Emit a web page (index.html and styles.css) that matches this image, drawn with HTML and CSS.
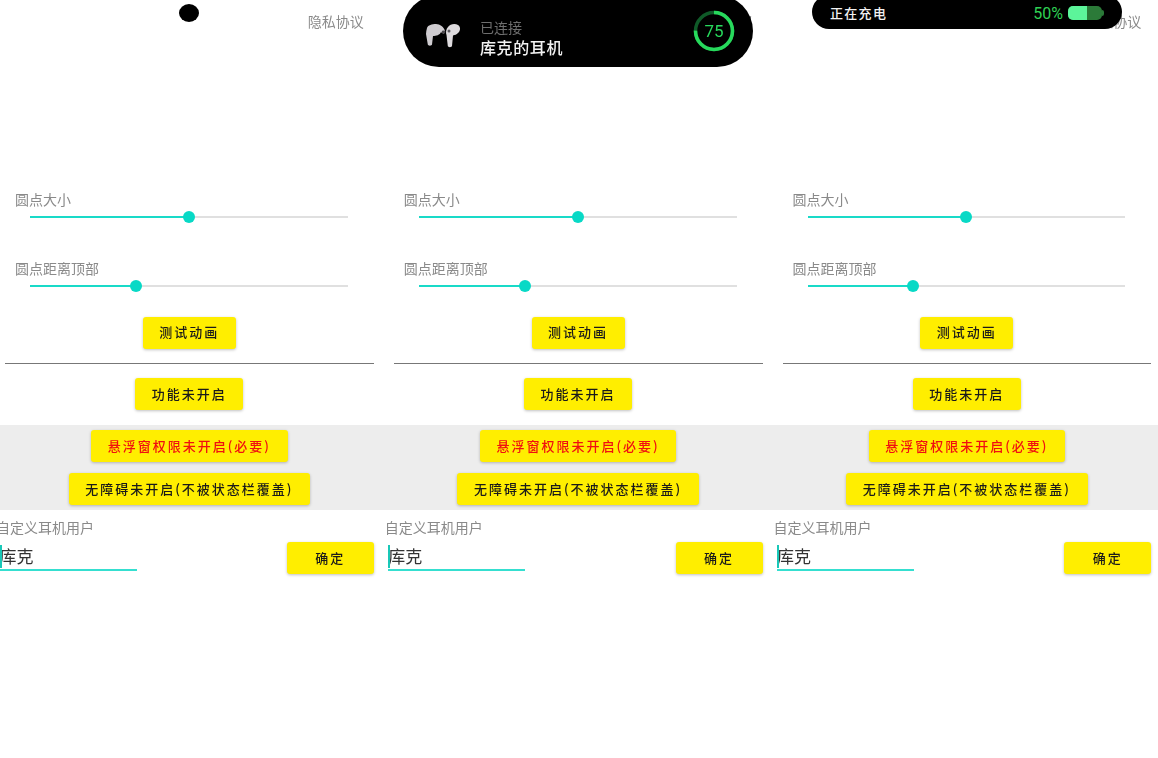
FILE: index.html
```html
<!DOCTYPE html>
<html lang="zh-CN">
<head>
    <meta charset="UTF-8">
    <meta name="viewport" content="width=device-width, initial-scale=1.0">
    <title>灵动岛耳机</title>
    <link rel="stylesheet" href="styles.css">
</head>
<body>
    <div class="screens">
        <section class="screen">
            <div class="dot"></div>
            <div class="top-row"><span class="privacy">隐私协议</span></div>
            <div class="slider-label first">圆点大小</div>
            <div class="slider"><div class="fill half"><i class="thumb"></i></div></div>
            <div class="slider-label">圆点距离顶部</div>
            <div class="slider"><div class="fill third"><i class="thumb"></i></div></div>
            <div class="center"><button class="btn test">测试动画</button></div>
            <hr class="line">
            <div class="center"><button class="btn">功能未开启</button></div>
            <div class="band">
                <button class="btn red">悬浮窗权限未开启(必要)</button>
                <button class="btn">无障碍未开启(不被状态栏覆盖)</button>
            </div>
            <div class="custom-label">自定义耳机用户</div>
            <div class="custom-row">
                <div class="field">库克</div>
                <button class="btn ok">确定</button>
            </div>
        </section>

        <section class="screen">
            <div class="island connected">
                <svg class="pods" viewBox="0 0 48 36" width="48" height="36">
                    <path d="M9 12c1-3 5-4 9-4 4 0 8 3 9 7 .5 2-1 3-3 2l-1-1c-1 3-5 4-8 4l-1 8.500c-.2 1.500-4 1.500-4.200 0L8 18c0-2 .5-4 1-6z" fill="#cfccd0"/>
                    <path d="M30 11c2-3 7-4 10-2 3 2 2.500 6 0 8-1.500 1.500-3 2-5 2.500l-1 10.500c-.2 1.500-4 1.500-4.200 0L28.500 19c-1-2-.5-6 1.500-8z" fill="#dedbde"/>
                    <ellipse cx="25.500" cy="16" rx="1.800" ry="1.400" fill="#4a474c"/>
                    <ellipse cx="31" cy="15" rx="1.500" ry="1.500" fill="#5b585e"/>
                </svg>
                <div class="pod-text">
                    <div class="pod-state">已连接</div>
                    <div class="pod-name">库克的耳机</div>
                </div>
                <div class="ring">
                    <svg viewBox="0 0 44 44" width="44" height="44">
                        <circle cx="22" cy="22" r="18.500" fill="none" stroke="#0f5a28" stroke-width="3.500"/>
                        <circle cx="22" cy="22" r="18.500" fill="none" stroke="#27d95c" stroke-width="3.500" stroke-dasharray="87 117" transform="rotate(-90 22 22)"/>
                    </svg>
                    <span class="ring-num">75</span>
                </div>
            </div>
            <div class="top-row"><span class="privacy">隐私协议</span></div>
            <div class="slider-label first">圆点大小</div>
            <div class="slider"><div class="fill half"><i class="thumb"></i></div></div>
            <div class="slider-label">圆点距离顶部</div>
            <div class="slider"><div class="fill third"><i class="thumb"></i></div></div>
            <div class="center"><button class="btn test">测试动画</button></div>
            <hr class="line">
            <div class="center"><button class="btn">功能未开启</button></div>
            <div class="band">
                <button class="btn red">悬浮窗权限未开启(必要)</button>
                <button class="btn">无障碍未开启(不被状态栏覆盖)</button>
            </div>
            <div class="custom-label">自定义耳机用户</div>
            <div class="custom-row">
                <div class="field">库克</div>
                <button class="btn ok">确定</button>
            </div>
        </section>

        <section class="screen">
            <div class="island charging">
                <span class="charge-text">正在充电</span>
                <span class="charge-num">50%</span>
                <div class="battery"><div class="battery-level"></div></div>
            </div>
            <div class="top-row"><span class="privacy">隐私协议</span></div>
            <div class="slider-label first">圆点大小</div>
            <div class="slider"><div class="fill half"><i class="thumb"></i></div></div>
            <div class="slider-label">圆点距离顶部</div>
            <div class="slider"><div class="fill third"><i class="thumb"></i></div></div>
            <div class="center"><button class="btn test">测试动画</button></div>
            <hr class="line">
            <div class="center"><button class="btn">功能未开启</button></div>
            <div class="band">
                <button class="btn red">悬浮窗权限未开启(必要)</button>
                <button class="btn">无障碍未开启(不被状态栏覆盖)</button>
            </div>
            <div class="custom-label">自定义耳机用户</div>
            <div class="custom-row">
                <div class="field">库克</div>
                <button class="btn ok">确定</button>
            </div>
        </section>
    </div>
</body>
</html>
```

FILE: styles.css
```css
html, body {
    height: 100%;
}

body {
    margin: 0;
    background: #fff;
    overflow: hidden;
    font-family: "Noto Sans CJK SC", "Noto Sans", sans-serif;
}

.screens {
    display: flex;
    margin-left: -5px;
    width: 1167px;
    filter: blur(0.5px);
}

.screen {
    position: relative;
    flex: 0 0 388.750px;
    height: 758px;
}

.top-row {
    display: flex;
    justify-content: flex-end;
    padding: 11px 20px 0 0;
}

.privacy {
    font-size: 14px;
    line-height: 20px;
    color: #8a8a8a;
}

.slider-label {
    margin: 40.500px 0 0 20px;
    font-size: 14px;
    line-height: 20px;
    color: #8a8a8a;
}

.slider-label.first {
    margin-top: 158px;
}

.slider {
    position: relative;
    height: 2px;
    margin: 6.500px 36px 0 35px;
    background: #e0e0e0;
}

.fill {
    position: relative;
    height: 2.500px;
    background: #19dac8;
}

.half {
    width: 50%;
}

.third {
    width: 33.300%;
}

.thumb {
    position: absolute;
    right: -6px;
    top: -4.750px;
    width: 12px;
    height: 12px;
    border-radius: 50%;
    background: #08d9c6;
}

.center {
    display: flex;
    justify-content: center;
}

.btn {
    height: 32px;
    padding: 0 16.500px 2px;
    border: none;
    border-radius: 3px;
    background: #ffee00;
    color: #1a1a1a;
    font-family: inherit;
    font-size: 13px;
    font-weight: 500;
    letter-spacing: 2px;
    box-shadow: 0 1px 3px rgba(0, 0, 0, 0.25);
}

.test {
    margin-top: 30px;
}

.red {
    color: #f01010;
}

.line {
    height: 1px;
    margin: 14.500px 10px 14px;
    border: none;
    background: #777;
}

.band {
    display: flex;
    flex-direction: column;
    align-items: center;
    gap: 11px;
    margin-top: 15px;
    padding: 5px 0;
    background: #ededed;
}

.custom-label {
    margin: 7px 0 0 1px;
    font-size: 14px;
    line-height: 20px;
    color: #8a8a8a;
}

.custom-row {
    display: flex;
    justify-content: space-between;
    align-items: flex-start;
    margin: 5px 10px 0 4.500px;
}

.field {
    position: relative;
    width: 137px;
    height: 27px;
    border-bottom: 2px solid #35dfd0;
    font-size: 17px;
    line-height: 28px;
    color: #333;
}

.field::before {
    content: "";
    position: absolute;
    left: 0;
    top: 3px;
    width: 2px;
    height: 23px;
    background: #19c8b8;
}

.ok {
    width: 87px;
    padding: 0 0 2px;
}

/* the black islands hang over the top of the screen */
.dot {
    position: absolute;
    left: 184px;
    top: 4px;
    width: 20px;
    height: 18px;
    border-radius: 50%;
    background: #000;
}

.island {
    position: absolute;
    z-index: 2;
    display: flex;
    align-items: center;
    background: #000;
}

.connected {
    left: 19.250px;
    top: -5px;
    width: 350px;
    height: 72px;
    padding-top: 5px;
    box-sizing: border-box;
    border-radius: 36px;
}

.pods {
    margin-left: 15px;
}

.pod-text {
    margin: 6px 0 0 14px;
    flex: 1;
}

.pod-state {
    font-size: 14px;
    line-height: 20px;
    color: #6e6e6e;
}

.pod-name {
    font-size: 16px;
    font-weight: 500;
    line-height: 20px;
    letter-spacing: 0.600px;
    color: #f2f2f2;
}

.ring {
    position: relative;
    width: 44px;
    height: 44px;
    margin: 0 17px 5px 0;
}

.ring-num {
    position: absolute;
    inset: 0;
    text-align: center;
    font-family: Roboto, sans-serif;
    font-size: 17px;
    line-height: 44px;
    color: #27d95c;
}

.charging {
    left: 39.500px;
    top: -5px;
    width: 310px;
    height: 34px;
    padding: 2px 0 0 18px;
    box-sizing: border-box;
    border-radius: 17px;
}

.charge-text {
    flex: 1;
    margin-bottom: 2px;
    font-size: 13px;
    font-weight: 500;
    letter-spacing: 1.300px;
    color: #f2f2f2;
}

.charge-num {
    font-family: Roboto, sans-serif;
    font-size: 16px;
    color: #2fd054;
}

.battery {
    position: relative;
    width: 34px;
    height: 14px;
    margin: 0 20px 0 5px;
    border-radius: 5px;
    background: #2b7a38;
}

.battery-level {
    width: 19px;
    height: 14px;
    border-radius: 5px 0 0 5px;
    background: #5cf59a;
}

.battery::after {
    content: "";
    position: absolute;
    right: -2px;
    top: 4px;
    width: 2px;
    height: 6px;
    border-radius: 0 2px 2px 0;
    background: #2b7a38;
}
```
